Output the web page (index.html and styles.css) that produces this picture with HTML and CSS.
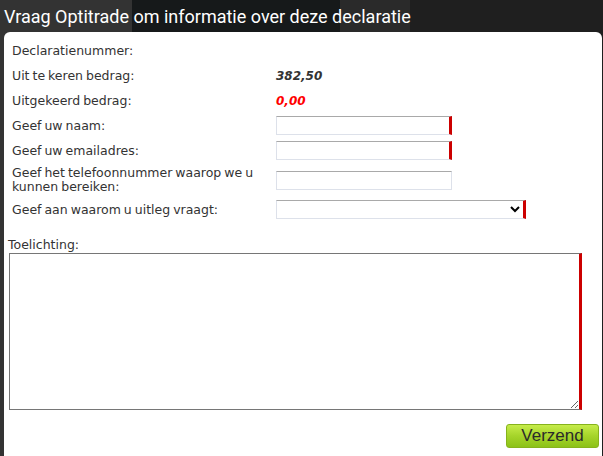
FILE: index.html
```html
<!DOCTYPE html>
<html lang="nl">
<head>
  <meta charset="UTF-8" />
  <title>Vraag Optitrade om informatie</title>
  <link rel="stylesheet" href="styles.css">
</head>
<body>
  <h1 class="dialog-title">Vraag Optitrade om informatie over deze declaratie</h1>
  <div class="dialog">
    <form id="infoForm">
      <table class="fields">
        <tr>
          <td class="lbl">Declaratienummer:</td>
          <td></td>
        </tr>
        <tr>
          <td class="lbl">Uit te keren bedrag:</td>
          <td class="amount">382,50</td>
        </tr>
        <tr>
          <td class="lbl">Uitgekeerd bedrag:</td>
          <td class="amount paid">0,00</td>
        </tr>
        <tr>
          <td class="lbl">Geef uw naam:</td>
          <td><input type="text" class="req" id="naam"></td>
        </tr>
        <tr>
          <td class="lbl">Geef uw emailadres:</td>
          <td><input type="text" class="req" id="email"></td>
        </tr>
        <tr>
          <td class="lbl">Geef het telefoonnummer waarop we u<br>kunnen bereiken:</td>
          <td><input type="text" id="telefoon"></td>
        </tr>
        <tr>
          <td class="lbl">Geef aan waarom u uitleg vraagt:</td>
          <td>
            <select class="req" id="reden">
              <option></option>
            </select>
          </td>
        </tr>
      </table>

      <label for="toelichting" class="note-label">Toelichting:</label>
      <textarea id="toelichting" class="req"></textarea>

      <div class="actions">
        <button type="submit" class="send-btn">Verzend</button>
      </div>
    </form>
  </div>
</body>
</html>
```

FILE: styles.css
```css
html, body {
  height: 100%;
}
body {
  margin: 0;
  font-family: 'DejaVu Sans', Verdana, sans-serif;
  color: #333;
  background: linear-gradient(90deg,
    #333 0, #333 132px,
    #16191a 132px, #16191a 340px,
    #2a2a2a 340px, #2a2a2a 410px,
    #1f1f1f 410px, #1f1f1f 100%);
  overflow: hidden;
}
.dialog-title {
  margin: 0;
  padding: 6px 0 0 4px;
  height: 26px;
  font-family: Roboto, 'Noto Sans', sans-serif;
  font-size: 18px;
  font-weight: normal;
  line-height: 22px;
  color: #fff;
  white-space: nowrap;
}
.dialog {
  margin-left: 4px;
  margin-right: 1px;
  background: #fff;
  border-radius: 6px 6px 0 0;
  padding: 6px 4px 20px 4px;
  height: 440px;
}
.fields {
  border-collapse: collapse;
}
.fields td {
  padding: 3px 0;
  height: 19px;
  font-size: 12px;
  line-height: 14px;
  vertical-align: middle;
}
.fields td.lbl {
  width: 264px;
  padding-left: 4px;
  font-size: 12.5px;
  word-spacing: -1px;
}
.amount {
  font-weight: bold;
  font-style: italic;
  font-size: 13px;
}
.amount.paid {
  color: #f00;
}
input[type=text] {
  box-sizing: border-box;
  width: 176px;
  height: 19px;
  margin: 0;
  padding: 1px 3px;
  border: 1px solid #dde1ea;
  border-top-color: #a9a9a9;
  font-family: inherit;
  font-size: 12px;
  display: block;
}
select {
  box-sizing: border-box;
  width: 250px;
  height: 19px;
  margin: 0;
  padding: 0 2px;
  border: 1px solid #dde1ea;
  border-top-color: #a9a9a9;
  background: #fff;
  font-family: inherit;
  font-size: 12px;
  display: block;
}
.req {
  border-right: 3px solid #c00 !important;
}
.note-label {
  display: block;
  margin-top: 15px;
  font-size: 12.5px;
  line-height: 15px;
}
textarea {
  display: block;
  box-sizing: border-box;
  width: 573px;
  height: 157px;
  margin: 1px 0 0 1px;
  border: 1px solid #767676;
  border-right: 2px solid #c00 !important;
  resize: both;
  font-family: inherit;
  font-size: 12px;
}
.actions {
  display: flex;
  justify-content: flex-end;
  padding-top: 14px;
  margin-right: -1px;
}
.send-btn {
  box-sizing: border-box;
  width: 93px;
  height: 24px;
  padding: 0;
  border: 1px solid #86b31c;
  border-radius: 3px;
  background: linear-gradient(#c6ec4a, #a5d42a 50%, #8cc218);
  color: #2a2a2a;
  font-family: 'Liberation Sans', Arial, sans-serif;
  font-size: 17px;
  line-height: 20px;
  cursor: pointer;
}
```
